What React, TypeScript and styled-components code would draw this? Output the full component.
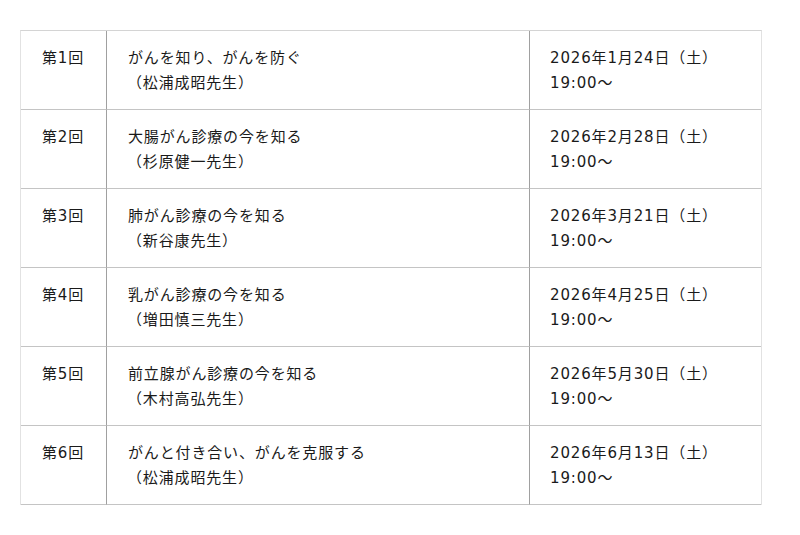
import * as React from "react";
import styled, { createGlobalStyle } from "styled-components";

interface Lecture {
  no: string;
  title: string;
  teacher: string;
  date: string;
  time: string;
}

const lectures: Lecture[] = [
  { no: "第1回", title: "がんを知り、がんを防ぐ", teacher: "（松浦成昭先生）", date: "2026年1月24日（土）", time: "19:00〜" },
  { no: "第2回", title: "大腸がん診療の今を知る", teacher: "（杉原健一先生）", date: "2026年2月28日（土）", time: "19:00〜" },
  { no: "第3回", title: "肺がん診療の今を知る", teacher: "（新谷康先生）", date: "2026年3月21日（土）", time: "19:00〜" },
  { no: "第4回", title: "乳がん診療の今を知る", teacher: "（増田慎三先生）", date: "2026年4月25日（土）", time: "19:00〜" },
  { no: "第5回", title: "前立腺がん診療の今を知る", teacher: "（木村高弘先生）", date: "2026年5月30日（土）", time: "19:00〜" },
  { no: "第6回", title: "がんと付き合い、がんを克服する", teacher: "（松浦成昭先生）", date: "2026年6月13日（土）", time: "19:00〜" },
];

const GlobalStyle = createGlobalStyle`
  body {
    margin: 0;
    background: #ffffff;
    font-family: "DejaVu Sans", "Noto Sans CJK JP", sans-serif;
    color: #1a1a1a;
  }
`;

const Page = styled.div`
  padding: 30px 38px 0 20px;
`;

const Table = styled.div`
  display: grid;
  grid-template-columns: 86px 423px 1fr;
  border-left: 1px solid #e2e2e2;
  border-right: 1px solid #e2e2e2;
  border-top: 1px solid #d4d4d4;
  width: 742px;
  box-sizing: border-box;
`;

let Cell = styled.div<{ $divider?: boolean }>`
  height: 79px;
  box-sizing: border-box;
  border-bottom: 1px solid #c4c4c4;
  border-right: ${(props) => (props.$divider ? "1px solid #a0a0a0" : "none")};
  padding: 15px 0 0 ${(props) => (props.$divider ? "21px" : "20px")};
  font-size: 15px;
  line-height: 25px;
  letter-spacing: 0.85px;
`;

let Line = styled.div`
  white-space: nowrap;
`;

const TeacherLine = styled(Line)`
  margin-left: -1px;
`;

export default function App() {
  return (
    <>
      <GlobalStyle />
      <Page>
        <Table>
          {lectures.map((l) => (
            <React.Fragment key={l.no}>
              <Cell $divider>
                <Line>{l.no}</Line>
              </Cell>
              <Cell $divider>
                <Line>{l.title}</Line>
                <TeacherLine>{l.teacher}</TeacherLine>
              </Cell>
              <Cell>
                <Line>{l.date}</Line>
                <Line>{l.time}</Line>
              </Cell>
            </React.Fragment>
          ))}
        </Table>
      </Page>
    </>
  );
}
